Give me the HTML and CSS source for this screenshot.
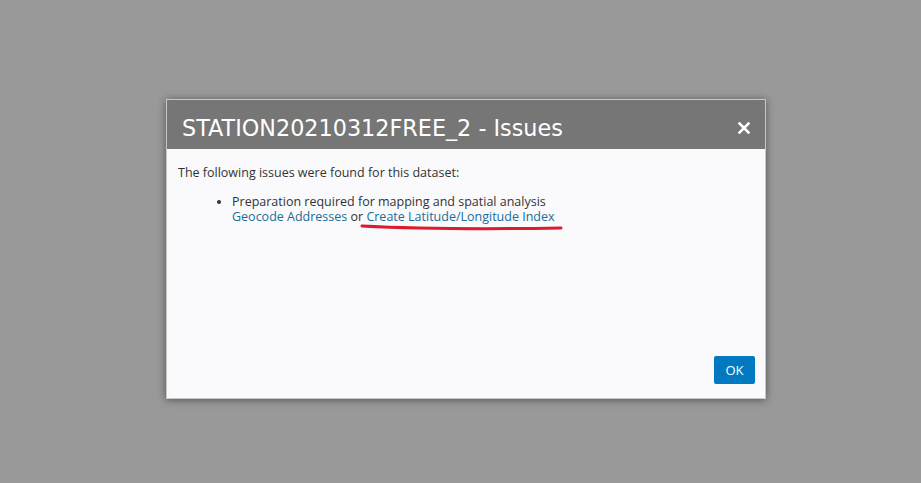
FILE: index.html
```html
<!DOCTYPE html>
<html>
<head>
<meta charset="utf-8">
<link rel="stylesheet" href="styles.css">
</head>
<body>
<div class="dialog">
  <div class="header">
    <h1 class="title">STATION20210312FREE_2 - Issues</h1>
    <svg class="close" width="12" height="12" viewBox="0 0 12 12"><path d="M1.5 1.5 L10.5 10.5 M10.5 1.5 L1.5 10.5" stroke="#ffffff" stroke-width="2.6" stroke-linecap="square"/></svg>
  </div>
  <div class="content">
    <p class="intro">The following issues were found for this dataset:</p>
    <ul class="issues">
      <li>Preparation required for mapping and spatial analysis<br>
        <a class="link">Geocode Addresses</a> or <span class="annot"><a class="link">Create Latitude/Longitude Index</a><svg class="redline" width="204" height="8" viewBox="0 0 204 8"><path d="M2 3 C 60 6, 140 6, 201 5" stroke="#dc1c2c" stroke-width="3" fill="none" stroke-linecap="round"/></svg></span>
      </li>
    </ul>
  </div>
  <div class="footer">
    <button class="ok">OK</button>
  </div>
</div>
</body>
</html>
```
FILE: styles.css
```css
html, body {
  margin: 0;
  padding: 0;
  background: #999999;
  height: 100%;
}
body {
  padding: 99px 0 0 166px;
  box-sizing: border-box;
  font-family: "Open Sans", "Liberation Sans", sans-serif;
}
.dialog {
  width: 600px;
  height: 300px;
  box-sizing: border-box;
  border: 1px solid #c8c8c8;
  background: #fafafd;
  box-shadow: 0 1px 8px rgba(0,0,0,0.45);
  display: flex;
  flex-direction: column;
}
.header {
  height: 49px;
  background: #767676;
  display: flex;
  align-items: center;
  justify-content: space-between;
  padding: 0 15px 0 15px;
}
.title {
  margin: 6px 0 0 0;
  font-family: "DejaVu Sans", Verdana, sans-serif;
  font-weight: normal;
  font-size: 22.3px;
  color: #ffffff;
}
.close {
  margin-top: 7px;
}
.content {
  flex: 1;
  padding: 16px 11px 0 11px;
  font-size: 12.5px;
  line-height: 15px;
  color: #333333;
}
.intro {
  margin: 0;
}
.issues {
  margin: 14px 0 0 0;
  padding-left: 54px;
}
.link {
  color: #1b6d96;
}
.annot {
  position: relative;
}
.redline {
  position: absolute;
  left: -6px;
  top: 15px;
}
.footer {
  display: flex;
  justify-content: flex-end;
  padding: 0 10px 14px 0;
}
.ok {
  width: 41px;
  height: 28px;
  border: none;
  border-radius: 2px;
  background: #0079c1;
  color: #ffffff;
  font-family: "Open Sans", sans-serif;
  font-size: 13px;
  padding: 0;
}
```
